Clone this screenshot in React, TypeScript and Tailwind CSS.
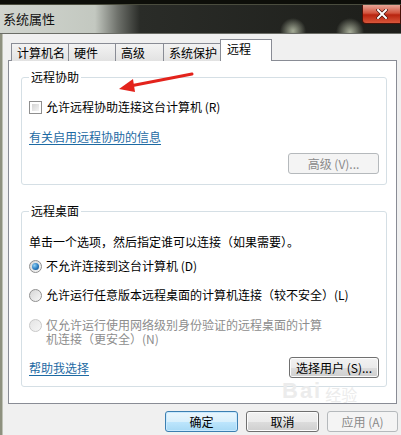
import React from 'react';

const tabs = [
  { label: '计算机名', w: 'w-[58px]' },
  { label: '硬件', w: 'w-[48px]' },
  { label: '高级', w: 'w-[49px]' },
  { label: '系统保护', w: 'w-[58px]' },
];

function Checkbox() {
  return (
    <span className="w-[13px] h-[13px] shrink-0 border border-[#8f8f8f] bg-white p-[2px] flex">
      <span className="flex-1 bg-gradient-to-br from-[#d4d4d4] to-[#f4f4f4]" />
    </span>
  );
}

function Radio({ checked, disabled }: { checked?: boolean; disabled?: boolean }) {
  return (
    <span
      className={`w-[13px] h-[13px] shrink-0 rounded-full border flex items-center justify-center bg-gradient-to-br ${
        disabled ? 'border-[#c8c8c8] from-[#e4e4e4] to-[#f6f6f6]' : 'border-[#8f8f8f] from-[#d6d6d6] to-[#f7f7f7]'
      }`}
    >
      {checked && (
        <span className="w-[7px] h-[7px] rounded-full bg-[radial-gradient(circle_at_35%_35%,#8fd0f5_0,#2a7cc0_55%,#0d3f72_100%)]" />
      )}
    </span>
  );
}

function WinButton({
  children,
  disabled,
  focused,
  className = '',
}: {
  children: React.ReactNode;
  disabled?: boolean;
  focused?: boolean;
  className?: string;
}) {
  const look = disabled
    ? 'border-[#b5b9bc] bg-[#f4f4f4] text-[#8a8a8a]'
    : focused
    ? 'border-[#3c7fb1] bg-[linear-gradient(#eaf6fd_0,#d9f0fc_50%,#bee6fd_51%,#a7d9f5_100%)] text-black shadow-[inset_0_0_0_1px_#c9eaff]'
    : 'border-[#707070] bg-[linear-gradient(#f2f2f2_0,#ebebeb_50%,#dddddd_51%,#cfcfcf_100%)] text-black shadow-[inset_0_0_0_1px_#fcfcfc]';
  return (
    <div className={`h-[21px] border rounded-[3px] flex items-center justify-center text-[12px] leading-none ${look} ${className}`}>
      {children}
    </div>
  );
}

export default function App() {
  return (
    <div className="relative w-[401px] h-[435px] overflow-hidden bg-[#f0f0f0] text-[12px] text-black font-['Noto_Sans_CJK_SC','Noto_Sans',sans-serif]">
      {/* top strip behind the window */}
      <div className="h-[5px] bg-[#0d0e09] border-b border-[#4a4c3e]" />

      {/* title bar */}
      <div className="h-[28px] flex justify-between bg-[radial-gradient(circle_at_293px_26px,#a6ad98_0,transparent_13px),radial-gradient(circle_at_350px_27px,#a8ae9a_0,transparent_14px),linear-gradient(90deg,#d1d5cf_0,#c3c8c0_95px,#6d706a_118px,#2a2c28_140px,#1d1e1a_100%)]">
        <span className="pl-[3px] pt-[6px] text-[13px] leading-[15px] text-[#111]">系统属性</span>
        <div className="w-[39px] h-[19px] rounded-bl-[4px] border border-t-0 border-[#4a1209] bg-[linear-gradient(#e8a596_0,#d2543e_45%,#b8240f_55%,#d8563a_100%)] flex items-center justify-center">
          <svg width="12" height="10" viewBox="0 0 12 10">
            <path d="M2 1 L10 9 M10 1 L2 9" stroke="#3a0a05" strokeWidth="3.2" strokeLinecap="square" />
            <path d="M2 1 L10 9 M10 1 L2 9" stroke="#ffffff" strokeWidth="2" strokeLinecap="square" />
          </svg>
        </div>
      </div>

      {/* window body */}
      <div className="flex border-t border-[#6b6d67]">
        <div className="w-[3px] h-[410px] bg-[#8e917f] border-r border-[#bfc2b6]" />
        <div className="ml-[5px] w-[389px] flex flex-col">
          {/* tabs */}
          <div className="mt-[5px] h-[22px] flex items-end pl-[3px] relative z-10 -mb-[1px]">
            {tabs.map((t) => (
              <div
                key={t.label}
                className={`${t.w} h-[18px] -ml-[1px] first:ml-0 border border-b-0 border-[#898c95] bg-[linear-gradient(#f3f3f3,#e2e2e2)] pl-[5px] leading-[17px]`}
              >
                {t.label}
              </div>
            ))}
            <div className="w-[52px] h-[22px] -ml-[1px] border border-b-0 border-[#898c95] bg-white pl-[6px] pt-[1px] leading-[16px]">
              远程
            </div>
          </div>

          {/* tab page */}
          <div className="h-[344px] border border-[#898c95] bg-white pt-[9px] pl-[12px] pr-[9px]">
            {/* 远程协助 */}
            <fieldset className="border border-[#d5dfe5] rounded-[3px] px-[7px] pb-[10px]">
              <legend className="px-[2px] leading-[14px]">远程协助</legend>
              <div className="mt-[15px] h-[16px] flex items-center gap-[4px]">
                <Checkbox />
                <span>允许远程协助连接这台计算机 (R)</span>
              </div>
              <div className="mt-[15px] h-[14px] leading-[14px]">
                <span className="text-[#1d6aa3] underline underline-offset-2">有关启用远程协助的信息</span>
              </div>
              <div className="mt-[9px] flex justify-end">
                <WinButton disabled className="w-[91px] h-[20px]">高级 (V)...</WinButton>
              </div>
            </fieldset>

            {/* 远程桌面 */}
            <fieldset className="mt-[19px] border border-[#d5dfe5] rounded-[3px] px-[7px] pb-[8px]">
              <legend className="px-[2px] leading-[14px]">远程桌面</legend>
              <div className="mt-[16px] leading-[15px]">单击一个选项，然后指定谁可以连接（如果需要）。</div>
              <div className="mt-[9px] h-[16px] flex items-center gap-[4px]">
                <Radio checked />
                <span>不允许连接到这台计算机 (D)</span>
              </div>
              <div className="mt-[13px] h-[16px] flex items-center gap-[4px]">
                <Radio />
                <span>允许运行任意版本远程桌面的计算机连接（较不安全）(L)</span>
              </div>
              <div className="mt-[15px] flex items-start gap-[4px] text-[#8d8d8d]">
                <span className="mt-[1px]">
                  <Radio disabled />
                </span>
                <div className="flex flex-col">
                  <span className="h-[14px] leading-[14px]">仅允许运行使用网络级别身份验证的远程桌面的计算</span>
                  <span className="h-[14px] leading-[14px]">机连接（更安全）(N)</span>
                </div>
              </div>
              <div className="mt-[11px] flex items-center justify-between">
                <span className="text-[#1d6aa3] underline underline-offset-2">帮助我选择</span>
                <WinButton className="w-[90px] h-[20px]">选择用户 (S)...</WinButton>
              </div>
            </fieldset>
          </div>

          {/* dialog buttons */}
          <div className="mt-[7px] flex justify-end gap-[8px] -mr-[1px]">
            <WinButton focused className="w-[73px]">确定</WinButton>
            <WinButton className="w-[73px]">取消</WinButton>
            <WinButton disabled className="w-[71px]">应用 (A)</WinButton>
          </div>
        </div>
      </div>

      {/* red annotation arrow */}
      <svg className="absolute left-0 top-0 pointer-events-none" width="401" height="435">
        <line x1="192" y1="74" x2="130" y2="86" stroke="#e3231c" strokeWidth="3" strokeLinecap="round" />
        <polygon points="119,89 133,79 135,92" fill="#e3231c" />
      </svg>

      {/* faint watermark */}
      <div className="absolute left-[282px] top-[380px] flex items-end gap-[3px] text-[#ececec] pointer-events-none select-none">
        <span className="text-[22px] leading-none font-bold tracking-[2px] font-['Liberation_Sans',sans-serif]">Bai</span>
        <span className="text-[16px] leading-none">经验</span>
      </div>
    </div>
  );
}
